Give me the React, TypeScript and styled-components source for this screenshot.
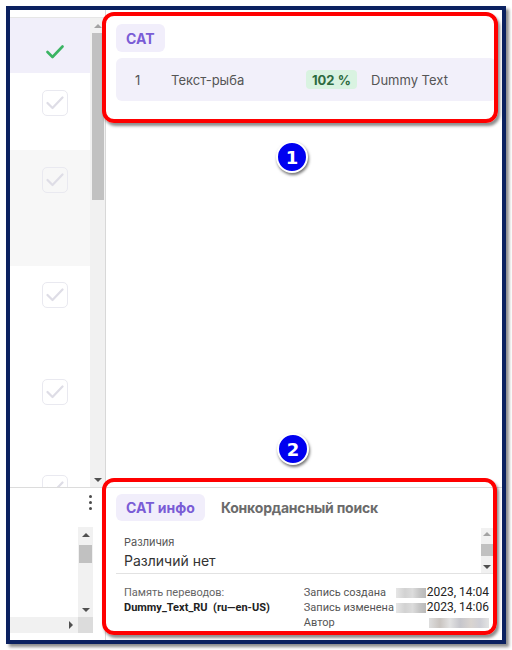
import React from "react";
import styled, { createGlobalStyle } from "styled-components";

const GlobalStyle = createGlobalStyle`
  html, body { margin: 0; padding: 0; background: #ffffff; }
  body { font-family: Inter, "Noto Sans", sans-serif; }
  * { box-sizing: border-box; }
`;

const Page = styled.div`
  width: 512px;
  height: 650px;
  padding: 6px 0 0 6px;
  background: #ffffff;
  overflow: hidden;
`;

const Frame = styled.div`
  position: relative;
  width: 500px;
  height: 638px;
  border: 4px solid #0b2160;
  box-shadow: 3px 3px 3px rgba(0, 0, 0, 0.45);
  display: flex;
  background: #ffffff;
`;

/* ---------- left column ---------- */
const LeftColumn = styled.div`
  width: 96px;
  flex: none;
  display: flex;
  flex-direction: column;
  border-right: 1px solid #d8d8d8;
`;

const LeftTop = styled.div`
  height: 478px;
  flex: none;
  display: flex;
  flex-direction: column;
  border-bottom: 1px solid #dcdcdc;
`;

const LeftHeader = styled.div`
  height: 8px;
  flex: none;
  border-bottom: 1px solid #e6e6e6;
`;

const LeftBody = styled.div`
  flex: 1;
  min-height: 0;
  display: flex;
`;

const RowList = styled.div`
  flex: 1;
  display: flex;
  flex-direction: column;
  overflow: hidden;
`;

const toneBg: Record<string, string> = {
  active: "#f1effa",
  plain: "#ffffff",
  muted: "#f7f7f7",
};

const ListRow = styled.div<{ $tone: string; $h: number; $pad: number }>`
  flex: none;
  height: ${(p) => p.$h}px;
  padding: ${(p) => p.$pad}px 0 0 32px;
  background: ${(p) => toneBg[p.$tone]};
`;

const CheckBox = styled.div<{ $done?: boolean }>`
  width: 26px;
  height: 26px;
  border-radius: 5px;
  border: 1px solid ${(p) => (p.$done ? "transparent" : "#e9e9f0")};
  display: flex;
  align-items: center;
  justify-content: center;
`;

const Check = ({ done }: { done?: boolean }) => (
  <CheckBox $done={done}>
    <svg width="18" height="14" viewBox="0 0 18 14">
      <polyline
        points="1.5,7 6.5,12 16.5,1.5"
        fill="none"
        stroke={done ? "#3bb463" : "#dedde6"}
        strokeWidth={done ? 2.6 : 2.2}
        strokeLinecap="round"
        strokeLinejoin="round"
      />
    </svg>
  </CheckBox>
);

/* ---------- scrollbars ---------- */
const VTrack = styled.div<{ $w: number }>`
  width: ${(p) => p.$w}px;
  flex: none;
  background: #f1f1f1;
  display: flex;
  flex-direction: column;
  align-items: center;
`;

const HTrack = styled.div`
  background: #f1f1f1;
  display: flex;
  justify-content: flex-end;
`;

const ArrowBtn = styled.div<{ $dir: "up" | "down" | "right"; $size: number; $dim?: boolean }>`
  width: ${(p) => p.$size}px;
  height: ${(p) => p.$size}px;
  flex: none;
  display: flex;
  align-items: center;
  justify-content: center;
  &::after {
    content: "";
    width: 0;
    height: 0;
    ${(p) =>
      p.$dir === "up"
        ? `border-left: 4px solid transparent; border-right: 4px solid transparent; border-bottom: 4px solid ${p.$dim ? "#a3a3a3" : "#505050"};`
        : p.$dir === "down"
        ? `border-left: 4px solid transparent; border-right: 4px solid transparent; border-top: 4px solid ${p.$dim ? "#a3a3a3" : "#505050"};`
        : `border-top: 4px solid transparent; border-bottom: 4px solid transparent; border-left: 4px solid #505050;`}
  }
`;

const Thumb = styled.div<{ $len: number; $gap: number; $w: number }>`
  width: ${(p) => p.$w}px;
  height: ${(p) => p.$len}px;
  margin-top: ${(p) => p.$gap}px;
  background: #c1c1c1;
  flex: none;
`;

const Spacer = styled.div`
  flex: 1;
`;

/* ---------- left bottom ---------- */
const LeftBottom = styled.div`
  flex: 1;
  display: flex;
  flex-direction: column;
`;

const KebabRow = styled.div`
  height: 39px;
  flex: none;
  display: flex;
  justify-content: flex-end;
  padding: 7px 13px 0 0;
`;

const Kebab = styled.div`
  width: 3px;
  display: flex;
  flex-direction: column;
  gap: 3px;
  span {
    width: 3px;
    height: 3px;
    border-radius: 50%;
    background: #4a4a4a;
  }
`;

const ScrollPane = styled.div`
  height: 106px;
  margin-right: 12px;
  display: grid;
  grid-template-columns: 1fr 15px;
  grid-template-rows: 1fr 16px;
`;

const Corner = styled.div`
  background: #dcdcdc;
`;

const PaneBody = styled.div`
  background: #ffffff;
`;

/* ---------- right column ---------- */
const RightColumn = styled.div`
  flex: 1;
  min-width: 0;
  display: flex;
  flex-direction: column;
`;

const RightTop = styled.div`
  flex: 1;
  padding: 14px 6px 0 10px;
  display: flex;
  flex-direction: column;
  align-items: flex-start;
  gap: 6px;
`;

const Chip = styled.div<{ $h: number }>`
  height: ${(p) => p.$h}px;
  padding: 0 10px;
  display: inline-flex;
  align-items: center;
  background: #f1eefb;
  color: #7a5cd6;
  font-weight: 700;
  font-size: 14px;
  border-radius: 6px;
  flex: none;
`;

const SegmentRow = styled.div`
  align-self: stretch;
  height: 43px;
  border-radius: 6px;
  background: #f2f0fa;
  display: grid;
  grid-template-columns: 36px 135px 65px auto;
  align-items: center;
  padding-left: 19px;
  font-size: 13px;
  color: #555555;
`;

const MatchBadge = styled.span`
  justify-self: start;
  height: 19px;
  padding: 0 6px;
  display: inline-flex;
  align-items: center;
  border-radius: 4px;
  background: #d9f3e1;
  color: #2d6a3f;
  font-weight: 700;
  font-size: 13px;
`;

const RightBottom = styled.div`
  height: 153px;
  flex: none;
  border-top: 1px solid #dcdcdc;
  padding: 6px 9px 0 10px;
  display: flex;
  flex-direction: column;
`;

const Tabs = styled.div`
  display: flex;
  align-items: center;
  gap: 16px;
`;

const Tab = styled.div`
  font-size: 14px;
  font-weight: 700;
  letter-spacing: -0.2px;
  color: #6b6b6b;
`;

const DiffBox = styled.div`
  margin-top: 7px;
  height: 46px;
  flex: none;
  border-bottom: 1px solid #e2e2e2;
  display: flex;
`;

const DiffText = styled.div`
  flex: 1;
  padding: 7px 0 0 8px;
`;

const SmallLabel = styled.div`
  font-size: 11px;
  line-height: 14px;
  color: #555555;
`;

const DiffValue = styled.div`
  margin-top: 3px;
  font-size: 14px;
  line-height: 18px;
  color: #333333;
`;

const Meta = styled.div`
  display: flex;
  padding: 11px 4px 0 8px;
  font-family: Roboto, "Liberation Sans", sans-serif;
  font-size: 11px;
  line-height: 15px;
`;

const MetaLeft = styled.div`
  flex: 1;
`;

const MetaMuted = styled.div`
  color: #666666;
`;

const MetaStrong = styled.div`
  color: #222222;
  font-weight: 700;
  white-space: pre;
`;

const MetaGrid = styled.div`
  display: grid;
  grid-template-columns: 92px auto;
  color: #555555;
  white-space: nowrap;
`;

const MetaValue = styled.div`
  display: flex;
  justify-content: flex-end;
  align-items: center;
  gap: 1px;
  color: #222222;
  font-size: 12px;
  white-space: nowrap;
`;

const Smudge = styled.span<{ $w: number; $warm?: boolean }>`
  display: inline-block;
  flex: none;
  width: ${(p) => p.$w}px;
  height: 10px;
  background: ${(p) =>
    p.$warm
      ? "linear-gradient(90deg, #dedede 0%, #c9c4c0 18%, #e2e2e2 35%, #c6c6cc 52%, #d9d4d0 70%, #cfcfd6 85%, #e4e4e4 100%)"
      : "linear-gradient(90deg, #e6e6e6 0%, #d2d2d2 30%, #dcdcdc 55%, #c4c4c4 80%, #b9b9b9 100%)"};
  filter: blur(0.5px);
`;

/* ---------- annotations ---------- */
const Callout = styled.div<{ $x: number; $y: number; $w: number; $h: number }>`
  position: absolute;
  left: ${(p) => p.$x}px;
  top: ${(p) => p.$y}px;
  width: ${(p) => p.$w}px;
  height: ${(p) => p.$h}px;
  border: 4px solid #ff0000;
  border-radius: 12px;
  box-shadow: 2px 3px 3px rgba(0, 0, 0, 0.45);
  pointer-events: none;
`;

const Badge = styled.div<{ $x: number; $y: number }>`
  position: absolute;
  left: ${(p) => p.$x}px;
  top: ${(p) => p.$y}px;
  width: 32px;
  height: 32px;
  border-radius: 50%;
  background: #0000f0;
  border: 2px solid #ffffff;
  box-shadow: 1px 2px 3px rgba(0, 0, 0, 0.55);
  color: #ffffff;
  font-family: "DejaVu Sans", sans-serif;
  font-weight: 700;
  font-size: 18px;
  display: flex;
  align-items: center;
  justify-content: center;
`;

const rows = [
  { tone: "active", h: 55, pad: 21, done: true },
  { tone: "plain", h: 77, pad: 17 },
  { tone: "muted", h: 116, pad: 17 },
  { tone: "plain", h: 96, pad: 16 },
  { tone: "plain", h: 96, pad: 17 },
  { tone: "plain", h: 96, pad: 17 },
];

export default function App() {
  return (
    <>
      <GlobalStyle />
      <Page>
        <Frame>
          <LeftColumn>
            <LeftTop>
              <LeftHeader />
              <LeftBody>
                <RowList>
                  {rows.map((r, i) => (
                    <ListRow key={i} $tone={r.tone} $h={r.h} $pad={r.pad}>
                      <Check done={r.done} />
                    </ListRow>
                  ))}
                </RowList>
                <VTrack $w={15}>
                  <ArrowBtn $dir="up" $size={15} $dim />
                  <Thumb $len={167} $gap={0} $w={12} />
                  <Spacer />
                  <ArrowBtn $dir="down" $size={15} />
                </VTrack>
              </LeftBody>
            </LeftTop>
            <LeftBottom>
              <KebabRow>
                <Kebab>
                  <span />
                  <span />
                  <span />
                </Kebab>
              </KebabRow>
              <ScrollPane>
                <PaneBody />
                <VTrack $w={15}>
                  <ArrowBtn $dir="up" $size={15} />
                  <Thumb $len={18} $gap={3} $w={13} />
                  <Spacer />
                  <ArrowBtn $dir="down" $size={15} />
                </VTrack>
                <HTrack>
                  <ArrowBtn $dir="right" $size={15} />
                </HTrack>
                <Corner />
              </ScrollPane>
            </LeftBottom>
          </LeftColumn>

          <RightColumn>
            <RightTop>
              <Chip $h={28}>CAT</Chip>
              <SegmentRow>
                <span>1</span>
                <span>Текст-рыба</span>
                <MatchBadge>102 %</MatchBadge>
                <span>Dummy Text</span>
              </SegmentRow>
            </RightTop>
            <RightBottom>
              <Tabs>
                <Chip $h={27}>CAT инфо</Chip>
                <Tab>Конкордансный поиск</Tab>
              </Tabs>
              <DiffBox>
                <DiffText>
                  <SmallLabel>Различия</SmallLabel>
                  <DiffValue>Различий нет</DiffValue>
                </DiffText>
                <VTrack $w={12}>
                  <ArrowBtn $dir="up" $size={12} $dim />
                  <Thumb $len={12} $gap={4} $w={12} />
                  <Spacer />
                  <ArrowBtn $dir="down" $size={12} />
                </VTrack>
              </DiffBox>
              <Meta>
                <MetaLeft>
                  <MetaMuted>Память переводов:</MetaMuted>
                  <MetaStrong>Dummy_Text_RU  (ru—en-US)</MetaStrong>
                </MetaLeft>
                <MetaGrid>
                  <span>Запись создана</span>
                  <MetaValue>
                    <Smudge $w={30} />
                    2023, 14:04
                  </MetaValue>
                  <span>Запись изменена</span>
                  <MetaValue>
                    <Smudge $w={30} />
                    2023, 14:06
                  </MetaValue>
                  <span>Автор</span>
                  <MetaValue>
                    <Smudge $w={60} $warm />
                  </MetaValue>
                </MetaGrid>
              </Meta>
            </RightBottom>
          </RightColumn>

          <Callout $x={92} $y={2} $w={396} $h={111} />
          <Callout $x={92} $y={468} $w={395} $h={157} />
          <Badge $x={266} $y={131}>1</Badge>
          <Badge $x={267} $y={423}>2</Badge>
        </Frame>
      </Page>
    </>
  );
}
